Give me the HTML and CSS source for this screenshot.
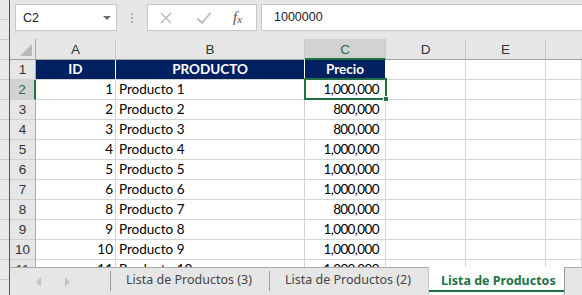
FILE: index.html
```html
<!DOCTYPE html>
<html lang="es">
<head>
    <meta charset="UTF-8">
    <title>Lista de Productos</title>
    <link rel="stylesheet" href="styles.css">
</head>
<body>
    <div class="app">
        <div class="edge"></div>
        <div class="main">
            <div class="formula-bar">
                <div class="name-box">
                    <span>C2</span>
                    <span class="caret"></span>
                </div>
                <div class="grip"><i></i><i></i><i></i></div>
                <div class="fx-buttons">
                    <svg class="btn-icon" width="14" height="14" viewBox="0 0 14 14"><path d="M2 2 L12 12 M12 2 L2 12" stroke="#b8b8b8" stroke-width="1.4" fill="none"/></svg>
                    <svg class="btn-icon" width="16" height="14" viewBox="0 0 16 14"><path d="M1.5 7.5 L6 12 L14.5 2" stroke="#b8b8b8" stroke-width="1.8" fill="none"/></svg>
                    <span class="fx">f<sub>x</sub></span>
                </div>
                <div class="formula-input">1000000</div>
            </div>

            <div class="sheet">
                <div class="grid">
                    <div class="corner"><span class="tri"></span></div>
                    <div class="col-head">A</div>
                    <div class="col-head">B</div>
                    <div class="col-head active">C</div>
                    <div class="col-head">D</div>
                    <div class="col-head">E</div>
                    <div class="col-head last"></div>

                    <div class="row-head">1</div>
                    <div class="cell title">ID</div>
                    <div class="cell title">PRODUCTO</div>
                    <div class="cell title">Precio</div>
                    <div class="cell"></div><div class="cell"></div><div class="cell"></div>

                    <div class="row-head active">2</div>
                    <div class="cell num">1</div>
                    <div class="cell">Producto 1</div>
                    <div class="cell price">1,000,000</div>
                    <div class="cell"></div><div class="cell"></div><div class="cell"></div>

                    <div class="row-head">3</div>
                    <div class="cell num">2</div>
                    <div class="cell">Producto 2</div>
                    <div class="cell price">800,000</div>
                    <div class="cell"></div><div class="cell"></div><div class="cell"></div>

                    <div class="row-head">4</div>
                    <div class="cell num">3</div>
                    <div class="cell">Producto 3</div>
                    <div class="cell price">800,000</div>
                    <div class="cell"></div><div class="cell"></div><div class="cell"></div>

                    <div class="row-head">5</div>
                    <div class="cell num">4</div>
                    <div class="cell">Producto 4</div>
                    <div class="cell price">1,000,000</div>
                    <div class="cell"></div><div class="cell"></div><div class="cell"></div>

                    <div class="row-head">6</div>
                    <div class="cell num">5</div>
                    <div class="cell">Producto 5</div>
                    <div class="cell price">1,000,000</div>
                    <div class="cell"></div><div class="cell"></div><div class="cell"></div>

                    <div class="row-head">7</div>
                    <div class="cell num">6</div>
                    <div class="cell">Producto 6</div>
                    <div class="cell price">1,000,000</div>
                    <div class="cell"></div><div class="cell"></div><div class="cell"></div>

                    <div class="row-head">8</div>
                    <div class="cell num">8</div>
                    <div class="cell">Producto 7</div>
                    <div class="cell price">800,000</div>
                    <div class="cell"></div><div class="cell"></div><div class="cell"></div>

                    <div class="row-head">9</div>
                    <div class="cell num">9</div>
                    <div class="cell">Producto 8</div>
                    <div class="cell price">1,000,000</div>
                    <div class="cell"></div><div class="cell"></div><div class="cell"></div>

                    <div class="row-head">10</div>
                    <div class="cell num">10</div>
                    <div class="cell">Producto 9</div>
                    <div class="cell price">1,000,000</div>
                    <div class="cell"></div><div class="cell"></div><div class="cell"></div>

                    <div class="row-head">11</div>
                    <div class="cell num">11</div>
                    <div class="cell">Producto 10</div>
                    <div class="cell price">1,000,000</div>
                    <div class="cell"></div><div class="cell"></div><div class="cell"></div>
                </div>
                <div class="selection"><span class="handle"></span></div>
            </div>

            <div class="tabs">
                <div class="tab-nav">
                    <span class="arrow left"></span>
                    <span class="arrow right"></span>
                </div>
                <div class="tab">Lista de Productos (3)</div>
                <div class="tab">Lista de Productos (2)</div>
                <div class="tab current">Lista de Productos</div>
            </div>
        </div>
    </div>
</body>
</html>
```

FILE: styles.css
```css
* {
    box-sizing: border-box;
}
body {
    margin: 0;
    width: 582px;
    height: 295px;
    overflow: hidden;
    background: #e6e6e6;
    font-family: 'Lato', sans-serif;
}
.app {
    display: flex;
    height: 295px;
}
.edge {
    width: 10px;
    flex: none;
    background: repeating-linear-gradient(to bottom, #e9e9e9 0, #e9e9e9 19px, #c9c9c9 19px, #c9c9c9 20px);
    border-right: 1px solid #217346;
}
.main {
    flex: 1;
    display: flex;
    flex-direction: column;
    min-width: 0;
}

/* formula bar */
.formula-bar {
    height: 39px;
    flex: none;
    display: flex;
    align-items: flex-start;
    padding: 4px 0 0 5px;
    font-family: 'Liberation Sans', sans-serif;
    font-size: 12.5px;
    color: #222;
}
.name-box {
    width: 102px;
    height: 27px;
    background: #fff;
    border: 1px solid #c6c6c6;
    display: flex;
    align-items: center;
    justify-content: space-between;
    padding: 0 5px 0 7px;
}
.caret {
    width: 0;
    height: 0;
    border-left: 4px solid transparent;
    border-right: 4px solid transparent;
    border-top: 4px solid #6a6a6a;
}
.grip {
    width: 30px;
    height: 27px;
    display: flex;
    flex-direction: column;
    align-items: center;
    justify-content: center;
    gap: 2px;
}
.grip i {
    width: 2px;
    height: 2px;
    background: #b0b0b0;
}
.fx-buttons {
    width: 110px;
    height: 27px;
    background: #fff;
    border: 1px solid #c6c6c6;
    display: flex;
    align-items: center;
    padding: 0 0 0 11px;
}
.btn-icon {
    margin-right: 23px;
}
.btn-icon + .btn-icon {
    margin-right: 21px;
}
.fx {
    font-family: 'Liberation Serif', serif;
    font-style: italic;
    font-size: 15px;
    color: #555;
}
.fx sub {
    font-size: 11px;
    vertical-align: -1px;
}
.formula-input {
    flex: 1;
    height: 27px;
    margin-left: 4px;
    background: #fff;
    border: 1px solid #c6c6c6;
    border-right: none;
    padding: 0 0 0 12px;
    line-height: 25px;
}

/* sheet */
.sheet {
    position: relative;
    height: 228px;
    flex: none;
    overflow: hidden;
    background: #fff;
}
.grid {
    display: grid;
    grid-template-columns: 26px 80px 189px 81px 80px 80px 1fr;
    grid-template-rows: 21px;
    grid-auto-rows: 20px;
    font-size: 13.5px;
    color: #000;
}
.corner,
.col-head {
    background: #e6e6e6;
    border-bottom: 1px solid #9f9f9f;
}
.corner {
    border-right: 1px solid #ababab;
    position: relative;
}
.tri {
    position: absolute;
    right: 3px;
    bottom: 3px;
    width: 0;
    height: 0;
    border-left: 12px solid transparent;
    border-bottom: 12px solid #b9b9b9;
}
.col-head {
    border-right: 1px solid #c9c9c9;
    text-align: center;
    line-height: 21px;
    font-size: 13.5px;
    color: #333;
    font-family: 'Liberation Sans', sans-serif;
}
.col-head.active {
    background: #d2d2d2;
    color: #217346;
    border-bottom: 2px solid #217346;
}
.col-head.last {
    border-right: none;
}
.row-head {
    background: #e6e6e6;
    border-right: 1px solid #ababab;
    border-bottom: 1px solid #d0d0d0;
    text-align: center;
    line-height: 19px;
    font-size: 13.5px;
    color: #333;
    font-family: 'Liberation Sans', sans-serif;
}
.row-head.active {
    background: #d2d2d2;
    color: #217346;
    border-right: 2px solid #217346;
}
.cell {
    border-right: 1px solid #d4d4d4;
    border-bottom: 1px solid #d4d4d4;
    line-height: 19px;
    padding: 0 3px;
    white-space: nowrap;
    overflow: hidden;
}
.cell.title {
    background: #002060;
    color: #fff;
    font-weight: bold;
    text-align: center;
    border-right-color: #fff;
}
.cell.num {
    text-align: right;
    padding-right: 2px;
}
.cell.price {
    text-align: right;
    padding-right: 6px;
    letter-spacing: -0.6px;
}
.selection {
    position: absolute;
    left: 294px;
    top: 39px;
    width: 83px;
    height: 22px;
    border: 2px solid #217346;
}
.handle {
    position: absolute;
    right: -4px;
    bottom: -4px;
    width: 6px;
    height: 6px;
    background: #217346;
    border: 1px solid #fff;
}

/* sheet tabs */
.tabs {
    flex: 1;
    display: flex;
    border-top: 1px solid #ababab;
    font-family: 'Noto Sans', sans-serif;
    font-size: 12.5px;
    color: #444;
}
.tab-nav {
    width: 100px;
    display: flex;
    align-items: center;
    padding-left: 26px;
    gap: 24px;
}
.arrow {
    width: 0;
    height: 0;
    border-top: 5px solid transparent;
    border-bottom: 5px solid transparent;
}
.arrow.left {
    border-right: 5px solid #c4c4c4;
}
.arrow.right {
    border-left: 5px solid #c4c4c4;
}
.tab {
    width: 159px;
    padding: 1px 0 0 15px;
    border-left: 1px solid #9e9e9e;
    margin: 3px 0 4px;
    line-height: 16px;
}
.tab.current {
    width: 137px;
    margin: -1px 0 0;
    padding: 6px 0 0 12px;
    background: #fff;
    border-left: 1px solid #c6c6c6;
    border-right: 1px solid #9e9e9e;
    color: #217346;
    font-weight: bold;
    position: relative;
}
.tab.current::after {
    content: "";
    position: absolute;
    left: 0;
    right: 0;
    top: 23px;
    height: 2px;
    background: #217346;
}
```
